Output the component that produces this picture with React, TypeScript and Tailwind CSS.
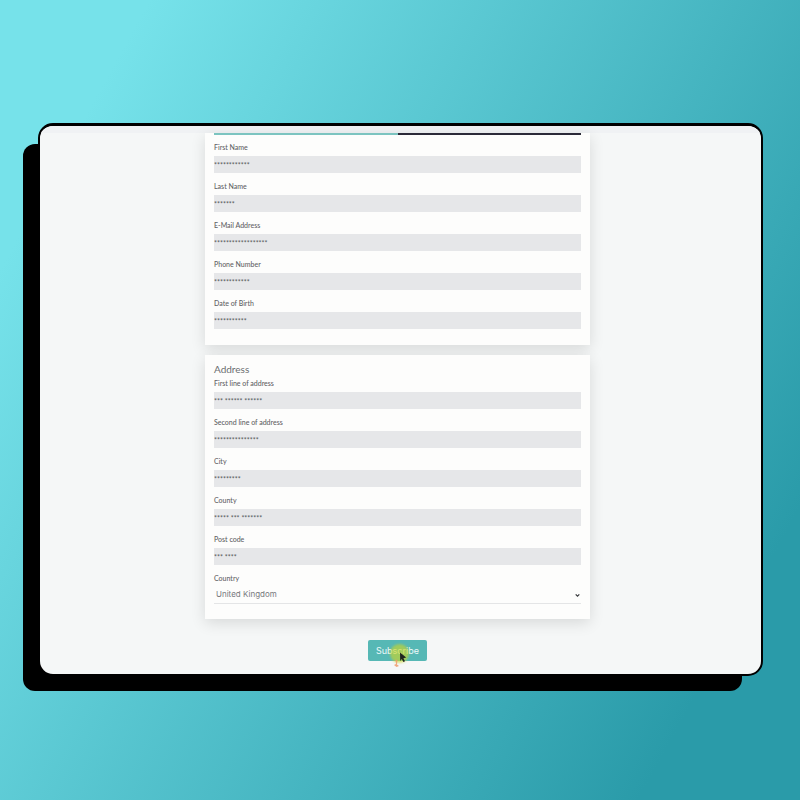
import React from "react";

type FieldData = { id: string; label: string; value: string };

const personal: FieldData[] = [
  { id: "first-name", label: "First Name", value: "************" },
  { id: "last-name", label: "Last Name", value: "*******" },
  { id: "email", label: "E-Mail Address", value: "******************" },
  { id: "phone", label: "Phone Number", value: "************" },
  { id: "birth", label: "Date of Birth", value: "***********" },
];

const address: FieldData[] = [
  { id: "line-1", label: "First line of address", value: "*** ****** ******" },
  { id: "line-2", label: "Second line of address", value: "***************" },
  { id: "city", label: "City", value: "*********" },
  { id: "county", label: "County", value: "***** *** *******" },
  { id: "post-code", label: "Post code", value: "*** ****" },
];

const labelClass = "block text-[7px] leading-[12px] font-medium text-[#5f6164]";

function Field({ id, label, value }: FieldData) {
  return (
    <div className="flex flex-col gap-[3px]">
      <label htmlFor={id} className={labelClass}>
        {label}
      </label>
      <input
        id={id}
        type="text"
        defaultValue={value}
        className="h-[17px] w-full rounded-none bg-[#e6e7e9] text-[7px] leading-[12px] text-[#55575b] outline-none"
      />
    </div>
  );
}

function Pointer() {
  return (
    <div className="pointer-events-none absolute top-[4px] left-[22px]">
      <div className="size-[19px] rounded-full bg-[#c9d62b]/65 blur-[1px]" />
      <svg
        className="absolute top-[7px] left-[3px]"
        width="14"
        height="18"
        viewBox="0 0 14 18"
        aria-hidden="true"
      >
        <path d="M2.5 8.5 4.5 9 4 13.5 6 15 3.5 16 1 14 3 13Z" fill="#ef9a6a" opacity="0.85" />
        <path
          d="M7 1.5 13.2 6.6 10.4 7.2 12 10.2 10.4 11 8.8 8.1 7.2 10Z"
          fill="#1f2420"
        />
      </svg>
    </div>
  );
}

export default function App() {
  return (
    <div className="flex min-h-screen items-center bg-linear-[119deg,#76e2ea_12%,#2a9ba9_87%] pr-[37px] pb-px pl-[38px] font-['Lato','Liberation_Sans',sans-serif]">
      <main className="flex-1 overflow-hidden rounded-[15px] border-2 border-t-[3px] border-black bg-[#f5f7f7] shadow-[-18px_18px_0_-3px_#000]">
        <div className="h-[7px] bg-[#f0f2f4]" />
        <form
          className="flex flex-col items-center pr-[6px] pb-[13px]"
          onSubmit={(e) => e.preventDefault()}
        >
          <section className="w-full max-w-[385px] bg-[#fdfdfc] px-[9px] pb-[16px] shadow-[0_4px_14px_rgba(0,0,0,0.12)]">
            <div className="flex h-[2px]">
              <div className="flex-1 bg-[#7cc4c0]" />
              <div className="flex-1 bg-[#2b2a38]" />
            </div>
            <div className="flex flex-col gap-[7px] pt-[6px]">
              {personal.map((field) => (
                <Field key={field.id} {...field} />
              ))}
            </div>
          </section>

          <section className="mt-[10px] w-full max-w-[385px] bg-[#fdfdfc] px-[9px] pt-[7px] pb-[15px] shadow-[0_4px_14px_rgba(0,0,0,0.12)]">
            <h2 className="mb-px text-[10px] leading-[14px] text-[#6b6d70]">
              Address
            </h2>
            <div className="flex flex-col gap-[7px]">
              {address.map((field) => (
                <Field key={field.id} {...field} />
              ))}
              <div>
                <label htmlFor="country" className={labelClass}>
                  Country
                </label>
                <div className="relative">
                  <select
                    id="country"
                    defaultValue="United Kingdom"
                    className="block h-[20px] w-full appearance-none border-b border-[#e4e5e6] bg-transparent pl-[2px] font-['Inter','Liberation_Sans',sans-serif] text-[8px] text-[#77797c] outline-none"
                  >
                    <option>United Kingdom</option>
                  </select>
                  <svg
                    className="pointer-events-none absolute top-[9px] right-[1px]"
                    width="5"
                    height="5"
                    viewBox="0 0 5 5"
                    aria-hidden="true"
                  >
                    <path d="M.7 1.4 2.5 3.2 4.3 1.4" fill="none" stroke="#3c3e40" strokeWidth="1.3" />
                  </svg>
                </div>
              </div>
            </div>
          </section>

          <div className="relative mt-[21px]">
            <button
              type="submit"
              className="block h-[21px] w-[59px] rounded-[2px] bg-[#56b8b5] font-['Inter','Liberation_Sans',sans-serif] text-[9px] leading-[21px] text-[#eefafa]"
            >
              Subscribe
            </button>
            <Pointer />
          </div>
        </form>
      </main>
    </div>
  );
}
